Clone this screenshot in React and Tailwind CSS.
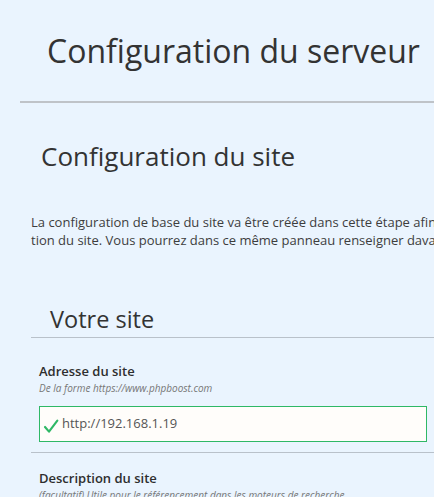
import React from 'react';

const font = { fontFamily: '"Open Sans", "Liberation Sans", sans-serif' };

const App = () => {
  return (
    <div className="h-[497px] w-[434px] overflow-hidden bg-[#eaf4fe] text-[#333]" style={font}>
      <header className="pl-[20px]">
        <h1 className="pt-[27px] pb-[26px] pl-[27px] text-[32px] leading-[48px] font-normal whitespace-nowrap">
          Configuration du serveur
        </h1>
        <div className="h-[2px] bg-[#bfc3c8]" />
      </header>

      <section className="pl-[31px]">
        <h2 className="pt-[36px] pl-[10px] text-[26px] leading-[34px] whitespace-nowrap">
          Configuration du site
        </h2>
        <div className="mt-[40px] text-[13px] leading-[18px] text-[#3d3d3d] whitespace-nowrap">
          <p>La configuration de base du site va être créée dans cette étape afin de permettre la personnalisa-</p>
          <p>tion du site. Vous pourrez dans ce même panneau renseigner davantage d'informations.</p>
        </div>

        <fieldset className="mt-[55px]">
          <legend className="pl-[19px] text-[23.5px] leading-[30px] whitespace-nowrap">Votre site</legend>
          <div className="mt-[3px] h-px bg-[#b9c1ca]" />

          <div className="pl-[8px] pr-[7px] pt-[24px] pb-[10px]">
            <label className="block text-[13px] font-semibold leading-[18px] text-[#2e2e2e]">Adresse du site</label>
            <span className="block text-[10px] italic leading-[16px] text-[#777]">
              De la forme https://www.phpboost.com
            </span>
            <div className="mt-[10px] flex h-[36px] items-center gap-[3px] border border-[#2fb866] bg-[#fffdfa] pl-[3px]">
              <svg viewBox="0 0 24 24" className="mt-[3px] h-[16px] w-[16px]" fill="none" stroke="#2fb866" strokeWidth="3.2" strokeLinecap="round" strokeLinejoin="round">
                <path d="M3 13.5l6 7L21.5 4" />
              </svg>
              <span className="text-[13px] text-[#555]">http://192.168.1.19</span>
            </div>
          </div>
          <div className="h-px bg-[#b9c1ca]" />

          <div className="pl-[8px] pt-[16px]">
            <label className="block text-[13px] font-semibold leading-[18px] text-[#2e2e2e]">Description du site</label>
            <span className="block text-[10px] italic leading-[16px] text-[#777]">
              (facultatif) Utile pour le référencement dans les moteurs de recherche
            </span>
          </div>
        </fieldset>
      </section>
    </div>
  );
};

export default App;
